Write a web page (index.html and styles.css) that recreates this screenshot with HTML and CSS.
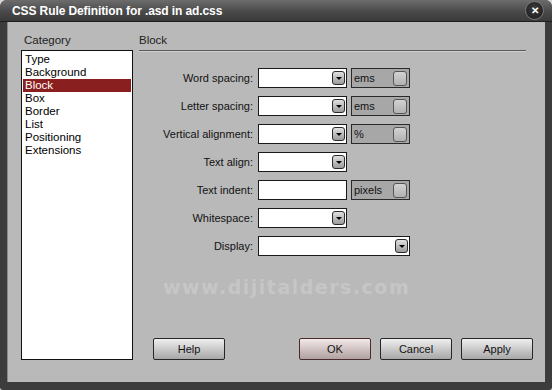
FILE: index.html
```html
<!DOCTYPE html>
<html lang="en">

<head>
  <meta charset="UTF-8">
  <title>CSS Rule Definition</title>
  <link rel="stylesheet" href="styles.css">
</head>

<body>
  <div class="window">
    <div class="titlebar">
      <span class="title">CSS Rule Definition for .asd in ad.css</span>
      <span class="close">&#x2715;</span>
    </div>

    <div class="content">
      <div class="side">
        <div class="caption">Category</div>
        <ul class="list">
          <li>Type</li>
          <li>Background</li>
          <li class="selected">Block</li>
          <li>Box</li>
          <li>Border</li>
          <li>List</li>
          <li>Positioning</li>
          <li>Extensions</li>
        </ul>
      </div>

      <div class="main">
        <div class="heading">Block</div>

        <div class="form">
          <label>Word spacing:</label>
          <div class="controls">
            <div class="select"><span class="arrow"></span></div>
            <div class="unit"><span>ems</span><span class="unit-btn"></span></div>
          </div>

          <label>Letter spacing:</label>
          <div class="controls">
            <div class="select"><span class="arrow"></span></div>
            <div class="unit"><span>ems</span><span class="unit-btn"></span></div>
          </div>

          <label>Vertical alignment:</label>
          <div class="controls">
            <div class="select"><span class="arrow"></span></div>
            <div class="unit"><span>%</span><span class="unit-btn"></span></div>
          </div>

          <label>Text align:</label>
          <div class="controls">
            <div class="select"><span class="arrow"></span></div>
          </div>

          <label>Text indent:</label>
          <div class="controls">
            <div class="field"></div>
            <div class="unit"><span>pixels</span><span class="unit-btn"></span></div>
          </div>

          <label>Whitespace:</label>
          <div class="controls">
            <div class="select"><span class="arrow"></span></div>
          </div>

          <label>Display:</label>
          <div class="controls">
            <div class="select wide"><span class="arrow"></span></div>
          </div>
        </div>

        <div class="watermark">www.dijitalders.com</div>

        <div class="buttons">
          <button class="btn help">Help</button>
          <div class="btn-group">
            <button class="btn ok">OK</button>
            <button class="btn">Cancel</button>
            <button class="btn">Apply</button>
          </div>
        </div>
      </div>
    </div>
  </div>
</body>

</html>
```

FILE: styles.css
```css
body {
  margin: 0;
  background-color: #d6d6d6;
  font-family: "Liberation Sans", Arial, sans-serif;
  font-size: 11px;
  color: #111;
}

.window {
  width: 552px;
  height: 390px;
  box-sizing: border-box;
  background-color: #3c3c3c;
  border-radius: 7px 7px 3px 3px;
  padding: 0 7px 8px 7px;
  display: flex;
  flex-direction: column;
}

.titlebar {
  height: 21px;
  margin: 0 -7px;
  padding: 0 8px 0 12px;
  display: flex;
  align-items: center;
  justify-content: space-between;
  background: linear-gradient(#6c6c6c, #4a4a4a 55%, #3a3a3a);
  border-radius: 7px 7px 0 0;
  border-bottom: 1px solid #1e1e1e;
}

.title {
  color: #fff;
  font-weight: bold;
  font-size: 12px;
  letter-spacing: -0.1px;
}

.close {
  width: 17px;
  height: 17px;
  border-radius: 50%;
  background: radial-gradient(circle at 50% 40%, #3a3a3a, #1c1c1c);
  border: 1px solid #777;
  color: #fff;
  font-size: 10px;
  font-weight: bold;
  display: flex;
  align-items: center;
  justify-content: center;
}

.content {
  flex: 1;
  background-color: #b9b9b9;
  border-left: 1px solid #8a8a8a;
  display: grid;
  grid-template-columns: 112px 1fr;
  column-gap: 6px;
  padding: 11px 12px 22px 13px;
}

.side {
  display: flex;
  flex-direction: column;
}

.caption,
.heading {
  height: 17px;
  line-height: 15px;
  font-size: 11.5px;
  color: #222;
}

.caption {
  padding-left: 3px;
}

.list {
  flex: 1;
  list-style: none;
  margin: 0;
  padding: 2px 1px;
  background-color: #fff;
  border: 1px solid #111;
}

.list li {
  height: 13px;
  line-height: 13px;
  padding-left: 2px;
  font-size: 11.5px;
  color: #000;
}

.list .selected {
  background-color: #8a1f1f;
  color: #fff;
}

.main {
  display: flex;
  flex-direction: column;
}

.heading {
  margin-right: 7px;
  border-bottom: 1px solid #5a5a5a;
  box-shadow: 0 1px 0 #cfcfcf;
}

.form {
  margin-top: 17px;
  display: grid;
  grid-template-columns: 114px 1fr;
  column-gap: 5px;
  row-gap: 8px;
}

.form label {
  height: 20px;
  line-height: 20px;
  text-align: right;
  color: #111;
}

.controls {
  display: flex;
  gap: 4px;
}

.select,
.field {
  width: 89px;
  height: 20px;
  box-sizing: border-box;
  border: 1px solid #1a1a1a;
  background-color: #fff;
}

.select {
  display: flex;
  justify-content: flex-end;
  align-items: center;
  padding-right: 1px;
}

.select.wide {
  width: 152px;
}

.arrow {
  width: 13px;
  height: 14px;
  box-sizing: border-box;
  border: 1px solid #2a2a2a;
  border-radius: 3px;
  background: linear-gradient(#e0e0e0, #9c9c9c);
  display: flex;
  align-items: center;
  justify-content: center;
}

.arrow::after {
  content: "";
  border-left: 3px solid transparent;
  border-right: 3px solid transparent;
  border-top: 3px solid #000;
}

.unit {
  width: 59px;
  height: 20px;
  box-sizing: border-box;
  border: 1px solid #2a2a2a;
  background-color: #a7a7a7;
  display: flex;
  align-items: center;
  justify-content: space-between;
  padding: 0 2px 0 2px;
  color: #111;
}

.unit-btn {
  width: 14px;
  height: 15px;
  box-sizing: border-box;
  border: 1px solid #555;
  border-radius: 3px;
  background: linear-gradient(#d2d2d2, #b2b2b2);
}

.watermark {
  margin-top: 20px;
  padding-left: 24px;
  font-family: "DejaVu Sans", sans-serif;
  font-weight: bold;
  font-size: 19px;
  letter-spacing: 1.5px;
  color: #c6c6c6;
}

.buttons {
  margin-top: auto;
  display: flex;
  justify-content: space-between;
  padding-left: 14px;
}

.btn-group {
  display: flex;
  gap: 9px;
}

.btn {
  width: 72px;
  height: 22px;
  box-sizing: border-box;
  border: 1px solid #262626;
  border-radius: 2px;
  background: linear-gradient(#efefef, #c4c4c4 60%, #a8a8a8);
  font-family: "Liberation Sans", Arial, sans-serif;
  font-size: 11px;
  color: #111;
  padding: 0;
}

.btn.ok {
  border-color: #4a2c2c;
  background: linear-gradient(#f2eaea, #cbbcbc 60%, #b0a2a2);
}
```
